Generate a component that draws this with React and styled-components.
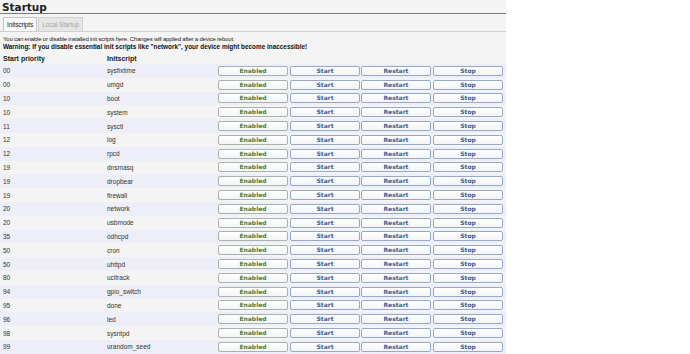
import React from "react";
import styled, { createGlobalStyle } from "styled-components";

const GlobalStyle = createGlobalStyle`
  html, body {
    margin: 0;
    padding: 0;
    background: #ffffff;
  }
  body {
    font-family: "Liberation Sans", Arial, sans-serif;
  }
`;

const Page = styled.div`
  width: 506px;
  min-height: 354px;
  background: #f4f4f4;
  overflow: hidden;
`;

const Title = styled.h2`
  margin: 0;
  padding: 2px 0 0 2px;
  height: 11px;
  font-family: "DejaVu Sans", Verdana, sans-serif;
  font-size: 10.5px;
  line-height: 11px;
  font-weight: bold;
  color: #222;
  border-bottom: 1px solid #7a7a7a;
`;

const TabBar = styled.ul`
  list-style: none;
  margin: 3px 0 0;
  padding: 0 0 0 3px;
  display: flex;
  gap: 1px;
  height: 14px;
  border-bottom: 1px solid #cfcfcf;
`;

const Tab = styled.li`
  height: 13px;
  padding: 0 3px;
  font-size: 6.6px;
  letter-spacing: -0.15px;
  line-height: 13px;
  border: 1px solid ${({ active }) => (active ? "#c4c4c4" : "#d2d2d2")};
  border-bottom: none;
  background: ${({ active }) => (active ? "#fafafa" : "#e6e6e6")};
  color: ${({ active }) => (active ? "#222" : "#a8a8a8")};
`;

const Note = styled.div`
  padding: 3px 0 0 3px;
  font-size: 6px;
  letter-spacing: -0.2px;
  line-height: 8px;
  color: #222;
`;

const Warning = styled.div`
  font-size: 6.4px;
  letter-spacing: 0;
  font-weight: bold;
  color: #111;
`;

const Table = styled.div`
  margin-top: 2px;
  display: flex;
  flex-direction: column;
`;

const Row = styled.div`
  display: grid;
  grid-template-columns: 104px 111px 72px 71px 72px 72px;
  align-items: center;
  height: ${({ head }) => (head ? "11px" : "13.8px")};
  padding-left: 3px;
  background: ${({ shade }) => (shade ? "#eeeef8" : "transparent")};
`;

const HeadCell = styled.div`
  font-size: 7px;
  font-weight: bold;
  color: #222;
`;

const Cell = styled.div`
  font-size: 6.5px;
  color: #333;
`;

const Button = styled.div`
  box-sizing: border-box;
  width: 70px;
  height: 10px;
  border: 1px solid ${({ green }) => (green ? "#a9b2ab" : "#97a9c6")};
  border-radius: 2px;
  background: linear-gradient(#ffffff, #f2f4f6);
  text-align: center;
  font-family: "DejaVu Sans", Verdana, sans-serif;
  font-size: 6px;
  line-height: 8px;
  font-weight: bold;
  color: ${({ green }) => (green ? "#4a7e43" : "#3a5f96")};
`;

const scripts = [
  ["00", "sysfixtime"],
  ["00", "umgd"],
  ["10", "boot"],
  ["10", "system"],
  ["11", "sysctl"],
  ["12", "log"],
  ["12", "rpcd"],
  ["19", "dnsmasq"],
  ["19", "dropbear"],
  ["19", "firewall"],
  ["20", "network"],
  ["20", "usbmode"],
  ["35", "odhcpd"],
  ["50", "cron"],
  ["50", "uhttpd"],
  ["80", "ucitrack"],
  ["94", "gpio_switch"],
  ["95", "done"],
  ["96", "led"],
  ["98", "sysntpd"],
  ["99", "urandom_seed"],
];

export default function App() {
  return (
    <>
      <GlobalStyle />
      <Page>
        <Title>Startup</Title>
        <TabBar>
          <Tab active>Initscripts</Tab>
          <Tab>Local Startup</Tab>
        </TabBar>
        <Note>
          You can enable or disable installed init scripts here. Changes will
          applied after a device reboot.
          <Warning>
            Warning: If you disable essential init scripts like "network", your
            device might become inaccessible!
          </Warning>
        </Note>
        <Table>
          <Row head>
            <HeadCell>Start priority</HeadCell>
            <HeadCell>Initscript</HeadCell>
          </Row>
          {scripts.map(([prio, name], i) => (
            <Row key={name} shade={i % 2 === 0}>
              <Cell>{prio}</Cell>
              <Cell>{name}</Cell>
              <Button green>Enabled</Button>
              <Button>Start</Button>
              <Button>Restart</Button>
              <Button>Stop</Button>
            </Row>
          ))}
        </Table>
      </Page>
    </>
  );
}
